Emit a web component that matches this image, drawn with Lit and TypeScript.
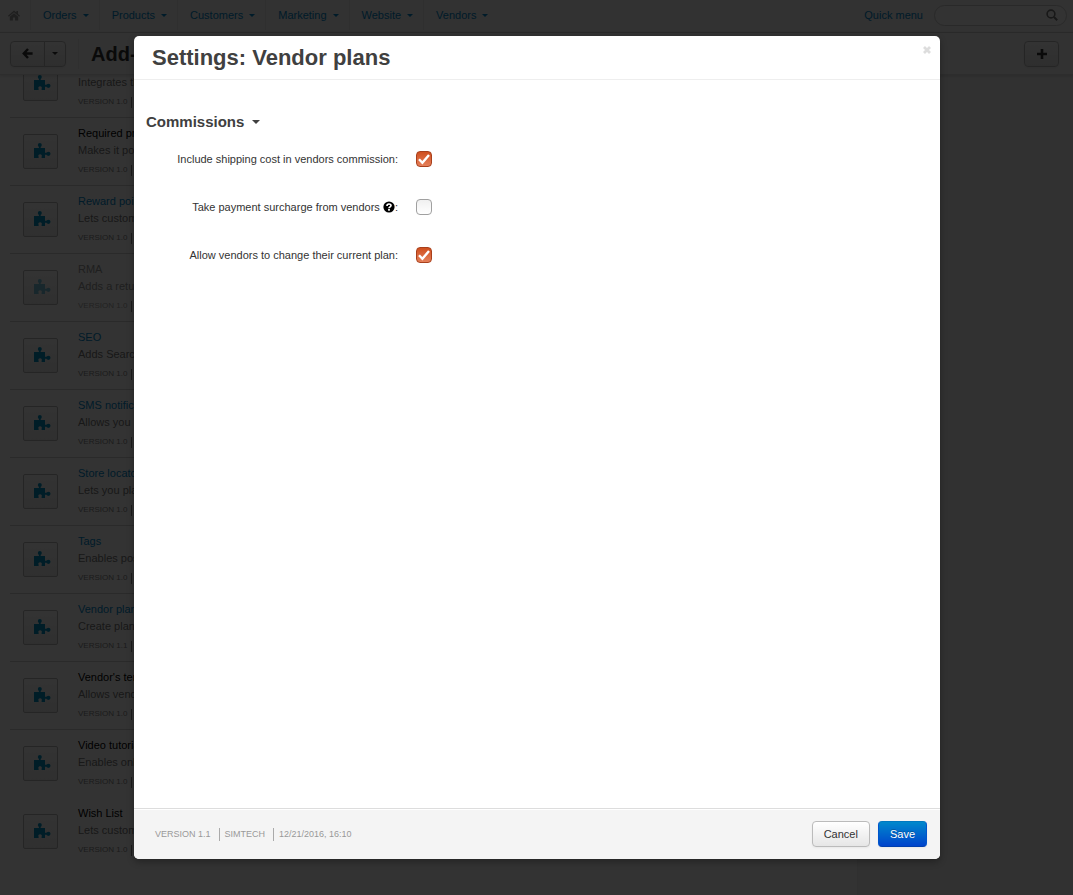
import { LitElement, html, css, svg, nothing } from "lit";
import { customElement, property } from "lit/decorators.js";
import { classMap } from "lit/directives/class-map.js";

interface Addon {
  name: string;
  text: string;
  version: string;
  kind: "link" | "plain" | "off";
}

interface Setting {
  id: string;
  label: string;
  help: boolean;
  checked: boolean;
}

const MENU = ["Orders", "Products", "Customers", "Marketing", "Website", "Vendors"];

const ADDONS: Addon[] = [
  { name: "", text: "Integrates the", version: "1.0", kind: "plain" },
  { name: "Required products", text: "Makes it possible", version: "1.0", kind: "plain" },
  { name: "Reward points", text: "Lets customers", version: "1.0", kind: "link" },
  { name: "RMA", text: "Adds a return", version: "1.0", kind: "off" },
  { name: "SEO", text: "Adds Search", version: "1.0", kind: "link" },
  { name: "SMS notifications", text: "Allows you", version: "1.0", kind: "link" },
  { name: "Store locator", text: "Lets you place", version: "1.0", kind: "link" },
  { name: "Tags", text: "Enables posting", version: "1.0", kind: "link" },
  { name: "Vendor plans", text: "Create plans", version: "1.1", kind: "link" },
  { name: "Vendor's terms", text: "Allows vendors", version: "1.0", kind: "plain" },
  { name: "Video tutorials", text: "Enables online", version: "1.0", kind: "plain" },
  { name: "Wish List", text: "Lets customers", version: "1.0", kind: "plain" },
];

const SETTINGS: Setting[] = [
  { id: "shipping", label: "Include shipping cost in vendors commission", help: false, checked: true },
  { id: "surcharge", label: "Take payment surcharge from vendors", help: true, checked: false },
  { id: "change", label: "Allow vendors to change their current plan", help: false, checked: true },
];

const homeIcon = svg`<svg width="12" height="11" viewBox="0 0 12 11" fill="currentColor" aria-hidden="true">
  <path d="M6 .6 0 5.8l.8.9L6 2.3l5.2 4.4.8-.9-2-1.8V1H8.4v1.6z"/>
  <path d="M6 3.2 1.8 6.7V10.4h3.1V7.4h2.2v3h3.1V6.7z"/>
</svg>`;

const arrowIcon = svg`<svg width="11" height="11" viewBox="0 0 11 11" fill="none" stroke="currentColor" stroke-width="2.5" aria-hidden="true">
  <path d="M6 1 1.8 5.5 6 10M2 5.5H10.6"/>
</svg>`;

const plusIcon = svg`<svg width="10" height="10" viewBox="0 0 10 10" fill="currentColor" aria-hidden="true">
  <path d="M3.7 0h2.6v3.7H10v2.6H6.3V10H3.7V6.3H0V3.7h3.7z"/>
</svg>`;

const searchIcon = svg`<svg width="12" height="12" viewBox="0 0 12 12" fill="none" stroke="currentColor" aria-hidden="true">
  <circle cx="5" cy="5" r="3.9" stroke-width="1.6"/>
  <path d="M8 8l3.2 3.2" stroke-width="2"/>
</svg>`;

const puzzleIcon = svg`<svg width="17" height="15" viewBox="0 0 17 15" fill="currentColor" aria-hidden="true">
  <circle cx="5.8" cy="2" r="2"/>
  <rect x="4.9" y="3" width="1.8" height="3"/>
  <path d="M0 5h11v4.8h2v2h-2V15H7.6v-1.2c.8-1.6-.2-2.6-1.5-2.6s-2.3 1-1.5 2.6V15H0z"/>
  <circle cx="14.4" cy="10.8" r="2.1"/>
</svg>`;

const closeIcon = svg`<svg width="8" height="8" viewBox="0 0 8 8" stroke="currentColor" stroke-width="2.8" aria-hidden="true">
  <path d="M1 1l6 6M7 1 1 7"/>
</svg>`;

const helpIcon = svg`<svg class="help" width="12" height="12" viewBox="0 0 12 12" role="img" aria-label="Help">
  <circle cx="6" cy="6" r="5.6" fill="#000"/>
  <path d="M4 4.9C4 2.4 8 2.4 8 4.6 8 5.9 6 5.8 6 7.3" fill="none" stroke="#fff" stroke-width="1.7"/>
  <rect x="5.1" y="8" width="1.8" height="1.7" fill="#fff"/>
</svg>`;

const tickIcon = svg`<svg class="tick" width="12" height="11" viewBox="0 0 12 11" fill="none" stroke="#fff" stroke-width="2.4" aria-hidden="true">
  <path d="M1 5.2 4.4 8.8 11 1"/>
</svg>`;

const shared = css`
  * {
    box-sizing: border-box;
  }
  a {
    color: #0088cc;
    text-decoration: none;
  }
  button,
  input {
    font: inherit;
    margin: 0;
  }
  .caret {
    display: inline-block;
    border: 3px solid transparent;
    border-top-color: currentColor;
    border-bottom: 0;
  }
  .btn {
    display: inline-flex;
    align-items: center;
    justify-content: center;
    height: 26px;
    padding: 0 11px;
    color: #333;
    border: 1px solid #bbb;
    border-radius: 4px;
    background: linear-gradient(#fff, #e6e6e6);
    box-shadow: 0 1px 2px rgba(0, 0, 0, 0.05);
  }
`;

@customElement("addon-row")
class AddonRow extends LitElement {
  @property({ attribute: false }) addon!: Addon;

  static styles = [
    shared,
    css`
      :host {
        display: block;
        height: 68px;
        border-bottom: 1px solid #d0d0d0;
      }
      :host(:nth-last-child(-n + 2)) {
        border-bottom-color: transparent;
      }
      .row {
        display: grid;
        grid-template-columns: 35px 1fr;
        column-gap: 20px;
        padding: 7px 13px 0;
      }
      .icon {
        display: grid;
        place-items: center;
        width: 35px;
        height: 35px;
        margin-top: 9px;
        padding: 0 0 2px 4px;
        color: #0093c4;
        border: 1px solid #b8b8b8;
        border-radius: 2px;
        background: linear-gradient(#fff, #ececec);
      }
      .name,
      .text {
        height: 17px;
        line-height: 17px;
      }
      .name {
        color: #000;
      }
      .text {
        color: #777;
      }
      .meta {
        display: flex;
        align-items: center;
        gap: 4px;
        height: 22px;
        font-size: 8px;
        color: #888;
      }
      .meta::after {
        content: "";
        height: 11px;
        border-left: 1px solid #888;
      }
      .off .icon svg {
        opacity: 0.5;
      }
      .off .name,
      .off .text {
        color: #999;
      }
      .off .meta {
        color: #aaa;
      }
    `,
  ];

  render() {
    const a = this.addon;
    return html`<div class=${classMap({ row: true, off: a.kind === "off" })}>
      <div class="icon">${puzzleIcon}</div>
      <div>
        <div class="name">${a.kind === "link" ? html`<a href="#">${a.name}</a>` : a.name}</div>
        <div class="text">${a.text}</div>
        <div class="meta">VERSION ${a.version}</div>
      </div>
    </div>`;
  }
}

@customElement("settings-dialog")
class SettingsDialog extends LitElement {
  static styles = [
    shared,
    css`
      :host {
        display: flex;
        flex-direction: column;
        flex: 1;
        overflow: hidden;
        color: #333;
        background: #fff;
        border-radius: 5px;
        box-shadow: 0 3px 7px rgba(0, 0, 0, 0.3);
      }
      header {
        display: flex;
        align-items: flex-start;
        justify-content: space-between;
        height: 44px;
        padding: 8px 9px 0 18px;
        border-bottom: 1px solid #eee;
      }
      h1 {
        margin: 0;
        font-size: 22px;
        line-height: 28px;
        color: #404040;
      }
      .close {
        display: flex;
        padding: 2px 0;
        border: 0;
        background: none;
        color: #ddd;
      }
      main {
        flex: 1;
        padding: 32px 12px;
      }
      h2 {
        display: flex;
        align-items: center;
        gap: 8px;
        margin: 0 0 17px;
        font-size: 15px;
        line-height: 20px;
        color: #404040;
      }
      h2 .caret {
        border-width: 4px 4px 0;
      }
      .field {
        display: grid;
        grid-template-columns: 252px 16px;
        column-gap: 18px;
        align-items: center;
        height: 20px;
        margin-bottom: 28px;
      }
      label {
        text-align: right;
        white-space: nowrap;
      }
      .help {
        vertical-align: -2px;
      }
      .box {
        display: grid;
        place-items: center;
      }
      .box > * {
        grid-area: 1 / 1;
      }
      input {
        appearance: none;
        width: 16px;
        height: 16px;
        border: 1px solid #a0a0a0;
        border-radius: 4px;
        background: linear-gradient(#f0f0f0, #fff);
      }
      input:checked {
        border-color: #a8401c;
        background: linear-gradient(#cf4f1e, #e5805a);
      }
      .tick {
        pointer-events: none;
        display: none;
      }
      input:checked + .tick {
        display: block;
      }
      footer {
        display: flex;
        align-items: center;
        gap: 8px;
        height: 51px;
        padding: 0 13px 0 21px;
        border-top: 1px solid #ddd;
        background: #f4f4f4;
        box-shadow: inset 0 1px 0 #fff;
      }
      .info {
        display: flex;
        flex: 1;
        font-size: 9px;
        line-height: 13px;
        color: #999;
      }
      .info span + span {
        margin-left: 8px;
        padding-left: 5px;
        border-left: 1px solid #aaa;
      }
      .save {
        color: #fff;
        border-color: #0078c0 #0055cc #003fae;
        background: linear-gradient(#0088cc, #0044cc);
        text-shadow: 0 -1px 0 rgba(0, 0, 0, 0.25);
      }
    `,
  ];

  render() {
    return html`
      <header>
        <h1>Settings: Vendor plans</h1>
        <button class="close" aria-label="Close">${closeIcon}</button>
      </header>
      <main>
        <h2>Commissions <span class="caret"></span></h2>
        ${SETTINGS.map(
          (s) => html`<div class="field">
            <label for=${s.id}>${s.label}${s.help ? html` ${helpIcon}` : nothing}:</label>
            <span class="box"><input id=${s.id} type="checkbox" ?checked=${s.checked} />${tickIcon}</span>
          </div>`
        )}
      </main>
      <footer>
        <div class="info"><span>VERSION 1.1</span><span>SIMTECH</span><span>12/21/2016, 16:10</span></div>
        <button class="btn">Cancel</button>
        <button class="btn save">Save</button>
      </footer>
    `;
  }
}

@customElement("app-root")
class AppRoot extends LitElement {
  static styles = [
    shared,
    css`
      :host {
        display: block;
        position: relative;
        height: 100vh;
        overflow: hidden;
        font: 11px/16px "Liberation Sans", Arial, sans-serif;
        background: #fff;
      }
      .page {
        display: flex;
        flex-direction: column;
        height: 100%;
      }
      .nav {
        display: flex;
        align-items: center;
        height: 33px;
        padding: 0 6px 2px 0;
        border-bottom: 1px solid #d0d0d0;
        background: #f7f7f7;
      }
      .home {
        display: flex;
        width: 30px;
        padding-left: 8px;
        color: #999;
      }
      .item {
        display: flex;
        align-items: center;
        gap: 6px;
        height: 30px;
        padding: 0 10px 0 12px;
        border-left: 1px solid #e8e8e8;
      }
      .quick {
        margin-left: auto;
      }
      .search {
        display: flex;
        align-items: center;
        width: 133px;
        height: 21px;
        margin-left: 11px;
        padding: 0 8px;
        color: #777;
        border: 1px solid #ccc;
        border-radius: 11px;
        background: #fff;
      }
      .search input {
        flex: 1;
        min-width: 0;
        border: 0;
        background: none;
      }
      .bar {
        display: flex;
        align-items: center;
        height: 42px;
        padding: 0 14px 0 10px;
        border-bottom: 1px solid #e0e0e0;
        background: #f9f9f9;
        box-shadow: 0 1px 3px rgba(0, 0, 0, 0.15);
        z-index: 1;
      }
      .back {
        width: 35px;
        border-radius: 4px 0 0 4px;
      }
      .more {
        width: 22px;
        padding: 0;
        margin-left: -1px;
        border-radius: 0 4px 4px 0;
      }
      h1 {
        flex: 1;
        margin: 0 0 0 12px;
        padding-left: 12px;
        font-size: 20px;
        line-height: 30px;
        color: #333;
        border-left: 1px solid #e8e8e8;
      }
      .add {
        width: 35px;
        padding: 0;
      }
      .content {
        display: grid;
        grid-template-columns: 1fr 216px;
        flex: 1;
        min-height: 0;
      }
      .list {
        margin: -25px 0 0 10px;
      }
      .side {
        background: #f4f4f4;
        border-left: 1px solid #eee;
      }
      .overlay {
        position: absolute;
        inset: 0;
        z-index: 2;
        display: flex;
        padding: 36px 133px 36px 134px;
        background: rgba(0, 0, 0, 0.8);
      }
    `,
  ];

  render() {
    return html`
      <div class="page">
        <nav class="nav">
          <a class="home" href="#" aria-label="Home">${homeIcon}</a>
          ${MENU.map((m) => html`<a class="item" href="#">${m}<span class="caret"></span></a>`)}
          <a class="quick" href="#">Quick menu</a>
          <label class="search"><input type="text" aria-label="Search" />${searchIcon}</label>
        </nav>
        <div class="bar">
          <button class="btn back" aria-label="Back">${arrowIcon}</button>
          <button class="btn more" aria-label="More"><span class="caret"></span></button>
          <h1>Add-</h1>
          <button class="btn add" aria-label="Add">${plusIcon}</button>
        </div>
        <div class="content">
          <div class="list">${ADDONS.map((a) => html`<addon-row .addon=${a}></addon-row>`)}</div>
          <div class="side"></div>
        </div>
      </div>
      <div class="overlay">
        <settings-dialog role="dialog" aria-modal="true" aria-label="Settings: Vendor plans"></settings-dialog>
      </div>
    `;
  }
}
